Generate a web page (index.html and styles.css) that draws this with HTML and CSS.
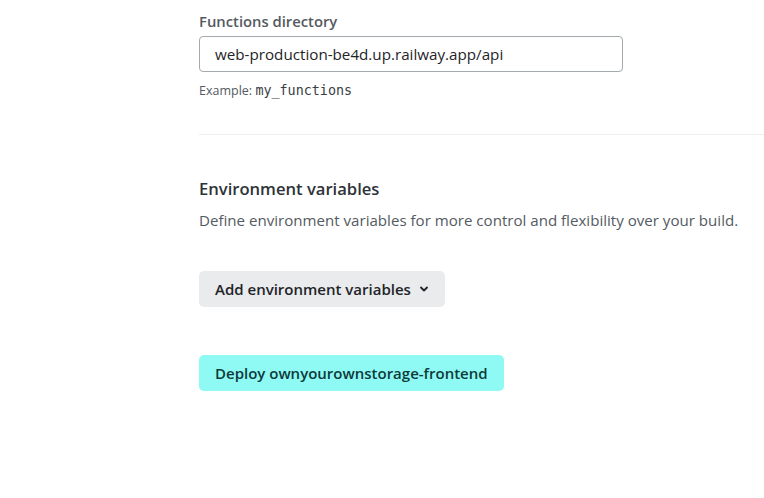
FILE: index.html
```html
<!DOCTYPE html>
<html>
<head>
<meta charset="utf-8">
<link rel="stylesheet" href="styles.css">
</head>
<body>
<div class="page">
  <section class="field">
    <label class="label" for="fd">Functions directory</label>
    <input id="fd" class="input" type="text" value="web-production-be4d.up.railway.app/api">
    <p class="hint">Example: <code class="code">my_functions</code></p>
  </section>
  <hr class="divider">
  <section class="env">
    <h3 class="title">Environment variables</h3>
    <p class="desc">Define environment variables for more control and flexibility over your build.</p>
    <button class="btn btn-secondary" type="button">Add environment variables
      <svg class="chev" width="10" height="10" viewBox="0 0 10 10"><path d="M2 3.5 L5 6.5 L8 3.5" fill="none" stroke="#1f2428" stroke-width="1.8" stroke-linecap="round" stroke-linejoin="round"/></svg>
    </button>
    <button class="btn btn-primary" type="button">Deploy ownyourownstorage-frontend</button>
  </section>
</div>
</body>
</html>
```
FILE: styles.css
```css
html, body {
  margin: 0;
  padding: 0;
  background: #ffffff;
}
body {
  font-family: "Open Sans", "Noto Sans", sans-serif;
  color: #2d3338;
}
.page {
  padding: 11px 0 0 199px;
}
.field {
  display: flex;
  flex-direction: column;
  align-items: flex-start;
}
.label {
  font-size: 14.8px;
  font-weight: 600;
  color: #545a61;
  line-height: 20px;
  margin-bottom: 5px;
}
.input {
  box-sizing: border-box;
  width: 424px;
  height: 36px;
  border: 1px solid #a3a9ac;
  border-radius: 4px;
  padding: 0 15px;
  font-family: inherit;
  font-size: 15.2px;
  color: #1f2428;
  outline: none;
}
.hint {
  margin: 10px 0 0;
  font-size: 12.5px;
  line-height: 18px;
  color: #545a61;
}
.code {
  font-family: "DejaVu Sans Mono", monospace;
  font-size: 13.4px;
  color: #3a4046;
}
.divider {
  border: 0;
  border-top: 1px solid #eeeeee;
  margin: 34px 0 0;
}
.env {
  display: flex;
  flex-direction: column;
  align-items: flex-start;
  padding-top: 42px;
}
.title {
  margin: 0;
  font-size: 16.6px;
  font-weight: 600;
  line-height: 24px;
  color: #2d3338;
}
.desc {
  margin: 8px 0 0;
  font-size: 15.1px;
  line-height: 22px;
  color: #545a61;
}
.btn {
  font-family: inherit;
  font-size: 15px;
  font-weight: 600;
  border: 0;
  border-radius: 5px;
  height: 36px;
  padding: 0 16px;
  display: inline-flex;
  align-items: center;
  gap: 8px;
  color: #1f2428;
}
.btn-secondary {
  margin-top: 40px;
  background: #e9ebed;
}
.btn-primary {
  margin-top: 48px;
  background: #8ffaf4;
  color: #0d3a3a;
}
.chev {
  display: block;
}
```
